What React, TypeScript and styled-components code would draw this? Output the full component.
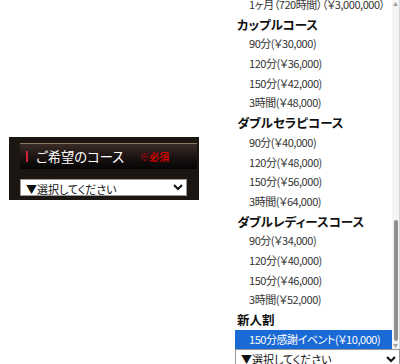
import React from 'react'
import styled, { createGlobalStyle } from 'styled-components'

type Item = { label: string; group?: boolean; selected?: boolean }

const items: Item[] = [
  { label: '1ヶ月（720時間）（￥3,000,000）' },
  { label: 'カップルコース', group: true },
  { label: '90分(￥30,000)' },
  { label: '120分(￥36,000)' },
  { label: '150分(￥42,000)' },
  { label: '3時間(￥48,000)' },
  { label: 'ダブルセラピコース', group: true },
  { label: '90分(￥40,000)' },
  { label: '120分(￥48,000)' },
  { label: '150分(￥56,000)' },
  { label: '3時間(￥64,000)' },
  { label: 'ダブルレディースコース', group: true },
  { label: '90分(￥34,000)' },
  { label: '120分(￥40,000)' },
  { label: '150分(￥46,000)' },
  { label: '3時間(￥52,000)' },
  { label: '新人割', group: true },
  { label: '150分感謝イベント(￥10,000)', selected: true },
]

const GlobalStyle = createGlobalStyle`
  html, body {
    margin: 0;
    padding: 0;
    background: #fff;
  }
  body {
    font-family: 'Noto Sans CJK JP', 'Noto Sans', sans-serif;
  }
`

export default function App() {
  return (
    <>
      <GlobalStyle />
      <Page>
        <LeftPane>
          <CourseBox>
            <Header>
              <RedMark />
              <Title>ご希望のコース</Title>
              <Required>※必須</Required>
            </Header>
            <CourseSelect defaultValue="">
              <option value="">▼選択してください</option>
            </CourseSelect>
          </CourseBox>
        </LeftPane>
        <RightPane>
          <Popup>
            <List>
              {items.map((item) => (
                <Row key={item.label} $group={item.group} $selected={item.selected}>
                  {item.label}
                </Row>
              ))}
            </List>
            <ScrollBar>
              <Arrow>▲</Arrow>
              <Thumb />
              <Arrow>▼</Arrow>
            </ScrollBar>
          </Popup>
          <BottomSelect defaultValue="">
            <option value="">▼選択してください</option>
          </BottomSelect>
        </RightPane>
      </Page>
    </>
  )
}

const Page = styled.div`
  display: flex;
  width: 400px;
  height: 364px;
  overflow: hidden;
`

const LeftPane = styled.div`
  width: 235px;
  flex-shrink: 0;
  padding: 137px 0 0 9px;
  box-sizing: border-box;
`

const CourseBox = styled.div`
  width: 190px;
  height: 63px;
  box-sizing: border-box;
  padding: 6px 2px 0 11px;
  background: #1b1612;
`

const Header = styled.div`
  display: flex;
  align-items: center;
  height: 26px;
  box-sizing: border-box;
  border-top: 1px solid #8a7a5c;
  background: linear-gradient(180deg, #3a2b26 0%, #1a1212 55%, #050505 100%);
`

const RedMark = styled.span`
  width: 2px;
  height: 11px;
  margin: 0 8px 0 6px;
  background: #d4203c;
`

const Title = styled.span`
  color: #fff;
  font-size: 13.3px;
  font-feature-settings: 'palt';
`

const Required = styled.span`
  margin-left: 15px;
  color: #d00000;
  font-size: 10px;
  font-weight: 700;
  font-feature-settings: 'palt';
`

const CourseSelect = styled.select`
  display: block;
  width: 167px;
  height: 17px;
  margin-top: 10px;
  padding: 0 0 0 1px;
  border: 1px solid #999;
  border-radius: 0;
  background: #fff;
  color: #111;
  font-family: 'Noto Sans CJK JP', sans-serif;
  font-size: 11px;
  font-feature-settings: 'palt';
`

const RightPane = styled.div`
  width: 165px;
  display: flex;
  flex-direction: column;
`

const Popup = styled.div`
  display: flex;
  height: 349px;
  flex-shrink: 0;
  background: #fff;
  border-right: 1px solid #d8d8d8;
  box-sizing: border-box;
  overflow: hidden;
`

const List = styled.div`
  flex: 1;
  min-width: 0;
  overflow: hidden;
  margin-top: -5px;
`

const Row = styled.div<{ $group?: boolean; $selected?: boolean }>`
  height: 19.7px;
  line-height: 19.7px;
  white-space: nowrap;
  font-size: ${(p) => (p.$group ? '12.5px' : '11px')};
  letter-spacing: ${(p) => (p.$group ? '0' : '-0.45px')};
  font-feature-settings: 'palt';
  padding-left: ${(p) => (p.$group ? '2px' : '14px')};
  font-weight: ${(p) => (p.$group ? 700 : 400)};
  color: ${(p) => (p.$selected ? '#fff' : p.$group ? '#111' : '#333')};
  background: ${(p) => (p.$selected ? '#1a6ad6' : 'transparent')};
`

const ScrollBar = styled.div`
  width: 7px;
  flex-shrink: 0;
  display: flex;
  flex-direction: column;
  align-items: center;
  background: #f4f4f4;
`

const Arrow = styled.span`
  font-size: 5px;
  line-height: 8px;
  color: #a0a0a0;
  &:last-child {
    margin-top: auto;
  }
`

const Thumb = styled.div`
  width: 4px;
  height: 124px;
  margin-top: 212px;
  border-radius: 2px;
  background: #8f8f8f;
`

const BottomSelect = styled.select`
  display: block;
  width: 165px;
  height: 20px;
  padding: 0 0 0 1px;
  border: 1px solid #999;
  border-radius: 0;
  background: #fff;
  color: #111;
  font-family: 'Noto Sans CJK JP', sans-serif;
  font-size: 11px;
  font-feature-settings: 'palt';
`
